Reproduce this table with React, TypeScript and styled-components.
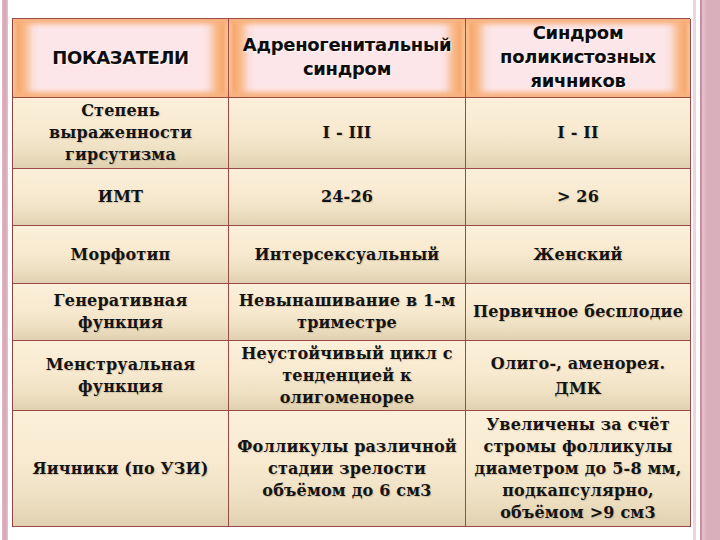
import React from 'react';
import styled, { createGlobalStyle } from 'styled-components';

const GlobalStyle = createGlobalStyle`
  html, body {
    margin: 0;
    padding: 0;
    background: #ffffff;
  }
`;

type Row = {
  height: number;
  cells: string[][];
};

const HEADER = [['ПОКАЗАТЕЛИ'], ['Адреногенитальный', 'синдром'], ['Синдром', 'поликистозных', 'яичников']];

const ROWS: Row[] = [
  { height: 71, cells: [['Степень', 'выраженности', 'гирсутизма'], ['I - III'], ['I - II']] },
  { height: 57, cells: [['ИМТ'], ['24-26'], ['> 26']] },
  { height: 58, cells: [['Морфотип'], ['Интерсексуальный'], ['Женский']] },
  { height: 57, cells: [['Генеративная', 'функция'], ['Невынашивание в 1-м', 'триместре'], ['Первичное бесплодие']] },
  {
    height: 70,
    cells: [['Менструальная', 'функция'], ['Неустойчивый цикл с', 'тенденцией к', 'олигоменорее'], ['Олиго-, аменорея.', 'ДМК']],
  },
  {
    height: 116,
    cells: [
      ['Яичники (по УЗИ)'],
      ['Фолликулы различной', 'стадии зрелости', 'объёмом до 6 см3'],
      ['Увеличены за счёт', 'стромы фолликулы', 'диаметром до 5-8 мм,', 'подкапсулярно,', 'объёмом >9 см3'],
    ],
  },
];

function Lines({ lines }: { lines: string[] }) {
  return (
    <>
      {lines.map((l, i) => (
        <Line key={i}>{l}</Line>
      ))}
    </>
  );
}

export default function App(): JSX.Element {
  return (
    <>
      <GlobalStyle />
      <Slide>
        <LeftFrame />
        <Content>
          <Table>
            {HEADER.map((h, i) => (
              <HeadCell key={i}>
                <HeadText $first={i === 0}>
                  <Lines lines={h} />
                </HeadText>
              </HeadCell>
            ))}
            {ROWS.map((r, ri) =>
              r.cells.map((c, ci) => (
                <BodyCell key={`${ri}-${ci}`} $h={r.height}>
                  <BodyText $tall={ri === 4 && ci === 2}>
                    <Lines lines={c} />
                  </BodyText>
                </BodyCell>
              ))
            )}
          </Table>
        </Content>
        <RightFrame>
          <ThinLine />
          <PinkBand />
        </RightFrame>
      </Slide>
    </>
  );
}

const Slide = styled.div`
  display: flex;
  width: 720px;
  height: 540px;
  overflow: hidden;
  background: #ffffff;
`;

const LeftFrame = styled.div`
  width: 6px;
  margin-left: 2px;
  margin-right: 4px;
  background: linear-gradient(to right, #e2b7c4, #d6a6b6 50%, #e6c0cc);
`;

const Content = styled.div`
  width: 678px;
  padding-top: 18px;
`;

const Table = styled.div`
  display: grid;
  grid-template-columns: 216px 237px 225px;
  grid-template-rows: 79px;
  border-top: 1px solid #9a4a48;
  border-left: 1px solid #8e4540;
  box-sizing: border-box;
`;

const HeadCell = styled.div`
  height: 79px;
  box-sizing: border-box;
  display: flex;
  align-items: center;
  justify-content: center;
  border-right: 1px solid #9a4a48;
  border-bottom: 1px solid #9a4a48;
  background: linear-gradient(
    to right,
    #fbc79c 0,
    #f6a86e 5px,
    #f9b887 11px,
    #fbdedb 20px,
    #fde6e9 26px,
    #fde6e9 calc(100% - 26px),
    #fbdedb calc(100% - 20px),
    #f9b887 calc(100% - 11px),
    #f6a86e calc(100% - 5px),
    #fbc79c 100%
  );
  box-shadow: inset 0 7px 5px -2px #f8b27e, inset 0 -7px 5px -2px #f8b27e;
`;

const HeadText = styled.div<{ $first: boolean }>`
  font-family: 'DejaVu Sans', Verdana, sans-serif;
  font-weight: bold;
  font-size: 18px;
  line-height: 24px;
  color: #0d0d0d;
  text-align: center;
  letter-spacing: ${(p) => (p.$first ? '-0.4px' : '-0.3px')};
  margin-top: ${(p) => (p.$first ? '0' : '-2px')};
  text-shadow: 1px 1px 1px rgba(255, 255, 255, 0.7);
`;

const BodyCell = styled.div<{ $h: number }>`
  height: ${(p) => p.$h}px;
  box-sizing: border-box;
  display: flex;
  align-items: center;
  justify-content: center;
  border-right: 1px solid #9a4a48;
  border-bottom: 1px solid #9a4a48;
  background: linear-gradient(to bottom, #fcf0da 0%, #f8ead0 45%, #eee0c2 75%, #dfd1b0 100%);
`;

const BodyText = styled.div<{ $tall: boolean }>`
  font-family: 'DejaVu Serif', 'Liberation Serif', serif;
  font-weight: bold;
  font-size: 16px;
  line-height: ${(p) => (p.$tall ? '25px' : '22px')};
  color: #141414;
  text-align: center;
  letter-spacing: 0.2px;
  text-shadow: 1px 1px 1px rgba(120, 90, 60, 0.25);
`;

const Line = styled.div`
  white-space: nowrap;
`;

const RightFrame = styled.div`
  display: flex;
  flex: 1;
  padding-left: 3px;
`;

const ThinLine = styled.div`
  width: 3px;
  margin-right: 4px;
  background: #ecd6dc;
`;

const PinkBand = styled.div`
  flex: 1;
  border-left: 2px solid #c98ea2;
  background: linear-gradient(to right, #e6c2cc, #d9afbb 30%, #d8b0bc);
`;
